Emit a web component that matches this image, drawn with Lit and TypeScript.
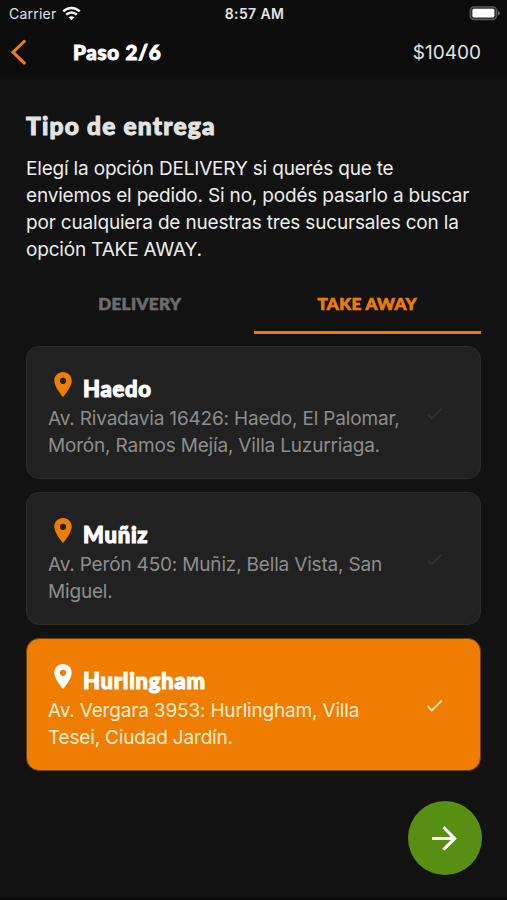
import { LitElement, html, css, svg } from "lit";
import { customElement, property } from "lit/decorators.js";
import { classMap } from "lit/directives/class-map.js";

interface Branch {
  name: string;
  lines: string[];
  selected?: boolean;
}

const BRANCHES: Branch[] = [
  { name: "Haedo", lines: ["Av. Rivadavia 16426: Haedo, El Palomar,", "Morón, Ramos Mejía, Villa Luzurriaga."] },
  { name: "Muñiz", lines: ["Av. Perón 450: Muñiz, Bella Vista, San", "Miguel."] },
  { name: "Hurlingham", lines: ["Av. Vergara 3953: Hurlingham, Villa", "Tesei, Ciudad Jardín."], selected: true },
];

const INTRO = [
  "Elegí la opción DELIVERY si querés que te",
  "enviemos el pedido. Si no, podés pasarlo a buscar",
  "por cualquiera de nuestras tres sucursales con la",
  "opción TAKE AWAY.",
];

const checkPath = svg`<path d="M9 16.17 4.83 12l-1.42 1.41L9 19 21 7l-1.41-1.41z"/>`;

@customElement("status-bar")
export class StatusBar extends LitElement {
  static styles = css`
    :host {
      display: grid;
      grid-template-columns: 1fr auto 1fr;
      align-items: center;
      height: 28px;
      padding: 0 7px 0 9px;
      color: #e4e4e4;
      font: 400 14px/28px Inter, "Liberation Sans", sans-serif;
    }
    .carrier { display: flex; align-items: center; gap: 6px; letter-spacing: 0.22px; }
    .wifi { width: 19px; height: 15px; margin-top: -2px; }
    .time { font-weight: 600; font-size: 14px; letter-spacing: 0.35px; }
    .battery { justify-self: end; width: 31px; height: 16px; margin-top: -2px; }
  `;
  render() {
    return html`
      <div class="carrier">
        <span>Carrier</span>
        <svg class="wifi" viewBox="0 0 19 15" fill="none" stroke="#f4f4f4" stroke-width="2.5">
          <path d="M1.2 5.4C6 .8 13 .8 17.8 5.4" />
          <path d="M4.2 8.7c3-2.9 7.6-2.9 10.6 0" />
          <path d="M9.5 14.3 6.6 11.3c1.7-1.5 4.1-1.5 5.8 0z" fill="#f4f4f4" stroke="none" />
        </svg>
      </div>
      <div class="time">8:57 AM</div>
      <svg class="battery" viewBox="0 0 31 16">
        <rect x="1.2" y="1.8" width="26.4" height="12.8" rx="3.8" fill="#333334" stroke="#5a5a5a" stroke-width="1.2" />
        <rect x="3.4" y="3.8" width="22" height="8.8" rx="1.8" fill="#fff" />
        <path d="M28.8 5.8q2 .8 2 2.4t-2 2.4z" fill="#6a6a6a" />
      </svg>
    `;
  }
}

@customElement("branch-card")
export class BranchCard extends LitElement {
  @property({ attribute: false }) branch!: Branch;
  static styles = css`
    :host { display: block; }
    .card {
      box-sizing: border-box;
      height: 133px;
      padding: 23px 35px 0 21px;
      border: 1px solid #2d2d2d;
      border-radius: 13px;
      background: #212121;
      color: #8d8d8d;
      display: flex;
      justify-content: space-between;
    }
    .selected { background: #ef7d00; border-color: #6f4210; color: #ffecd2; }
    .title { display: flex; height: 35px; }
    .pin { width: 30px; height: 31px; margin: -1px 0 0 0; fill: #ef7d00; flex: none; }
    .selected .pin { fill: #fff; }
    .name {
      margin: 5px 0 0 5px;
      color: #fff;
      font: 900 22px/28px Lato, "Open Sans", sans-serif;
      letter-spacing: 0.75px;
      -webkit-text-stroke: 1.1px #fff;
    }
    .line {
      font: 400 19px/27px Inter, "Liberation Sans", sans-serif;
      letter-spacing: -0.18px;
      white-space: nowrap;
    }
    .check { width: 21px; height: 21px; margin-top: 33px; fill: #323232; flex: none; }
    .selected .check { fill: #ffecd2; }
  `;
  render() {
    const b = this.branch;
    return html`
      <div class=${classMap({ card: true, selected: !!b.selected })}>
        <div>
          <div class="title">
            <svg class="pin" viewBox="0 0 24 24">
              <path d="M12 2C8.13 2 5 5.13 5 9c0 5.25 7 13 7 13s7-7.75 7-13c0-3.87-3.13-7-7-7zm0 9.5a2.5 2.5 0 0 1 0-5 2.5 2.5 0 0 1 0 5z" />
            </svg>
            <div class="name">${b.name}</div>
          </div>
          ${b.lines.map((l) => html`<div class="line">${l}</div>`)}
        </div>
        <svg class="check" viewBox="0 0 24 24">${checkPath}</svg>
      </div>
    `;
  }
}

@customElement("app-root")
export class AppRoot extends LitElement {
  static styles = css`
    :host {
      display: flex;
      flex-direction: column;
      box-sizing: border-box;
      width: 507px;
      height: 900px;
      overflow: hidden;
      background: #121212;
      border-bottom: 2px solid #090909;
      color: #ececec;
      font-family: Inter, "Liberation Sans", sans-serif;
    }
    .header { background: linear-gradient(#0c0c0c 74px, #121212 82px); height: 82px; flex: none; }
    .bar { display: flex; align-items: center; height: 48px; padding: 0 26px 0 9px; }
    .back { width: 20px; height: 28px; fill: none; stroke: #ef8010; stroke-width: 3; }
    .step {
      margin-left: 44px;
      font: 900 20.5px/28px Lato, "Open Sans", sans-serif;
      letter-spacing: 0.75px;
      color: #fff;
      -webkit-text-stroke: 1px #fff;
    }
    .total { margin-left: auto; font-size: 19px; color: #e2e2e2; }
    .content { padding: 30px 26px 0; }
    .heading {
      font: 900 24.5px/28px Lato, "Open Sans", sans-serif;
      letter-spacing: 1.2px;
      color: #e3e3e3;
      -webkit-text-stroke: 1px #e3e3e3;
    }
    .intro { margin-top: 15px; font-size: 19px; line-height: 27px; letter-spacing: -0.18px; white-space: nowrap; }
    .tabs { display: grid; grid-template-columns: 1fr 1fr; margin-top: 12px; height: 59px; }
    .tab {
      box-sizing: border-box;
      text-align: center;
      font: 900 17px/58px Lato, "Open Sans", sans-serif;
      letter-spacing: 0.4px;
      height: 59px;
      color: #6c6c6c;
      -webkit-text-stroke: 0.7px currentColor;
    }
    .active { color: #ef7d00; border-bottom: 3px solid #e07c10; }
    .cards { display: grid; gap: 13px; margin-top: 12px; }
    .next {
      display: grid;
      place-items: center;
      width: 74px;
      height: 74px;
      margin: 30px -1px 0 auto;
      border-radius: 50%;
      background: #568f12;
    }
    .arrow { width: 37px; height: 37px; margin-left: -2px; fill: #fff; }
  `;
  render() {
    return html`
      <div class="header">
        <status-bar></status-bar>
        <div class="bar">
          <svg class="back" viewBox="0 0 20 28"><path d="M16.2 2.5 4 14.2l12.2 11.7" /></svg>
          <div class="step">Paso 2/6</div>
          <div class="total">$10400</div>
        </div>
      </div>
      <div class="content">
        <div class="heading">Tipo de entrega</div>
        <div class="intro">${INTRO.map((l) => html`<div>${l}</div>`)}</div>
        <div class="tabs">
          <div class="tab">DELIVERY</div>
          <div class="tab active">TAKE AWAY</div>
        </div>
        <div class="cards">
          ${BRANCHES.map((b) => html`<branch-card .branch=${b}></branch-card>`)}
        </div>
        <div class="next">
          <svg class="arrow" viewBox="0 0 24 24"><path d="m12 4-1.41 1.41L16.17 11H4v2h12.17l-5.58 5.59L12 20l8-8z" /></svg>
        </div>
      </div>
    `;
  }
}
